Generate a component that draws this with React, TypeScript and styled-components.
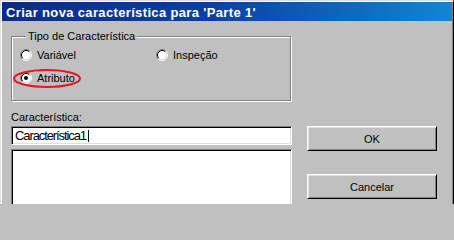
import React from "react";
import styled, { createGlobalStyle } from "styled-components";

const Global = createGlobalStyle`
  html, body { margin: 0; padding: 0; overflow: hidden; background: #c0c0c0; }
  body { width: 454px; height: 204px; }
`;

const Window = styled.div`
  box-sizing: border-box;
  width: 454px;
  height: 204px;
  overflow: hidden;
  display: flex;
  flex-direction: column;
  padding: 1px 1px 0 1px;
  background: #c0c0c0;
  border: 1px solid;
  border-bottom: 0;
  border-color: #dfdfdf #000 #000 #dfdfdf;
  box-shadow: inset 1px 1px 0 #fff, inset -1px 0 0 #808080;
  font-family: "Liberation Sans", Arial, sans-serif;
  font-size: 11px;
  color: #000;
`;

const TitleBar = styled.div`
  box-sizing: border-box;
  flex: none;
  height: 19px;
  padding: 2px 0 0 4px;
  background: linear-gradient(to right, #0a2a8c 0%, #0a3ea6 45%, #0c66bc 75%, #1086d4 100%);
  color: #fff;
  font-weight: bold;
  font-size: 13px;
  letter-spacing: 0.35px;
  line-height: 17px;
  white-space: nowrap;
`;

const Body = styled.div`
  flex: 1;
  min-height: 0;
  display: grid;
  grid-template-columns: 281px 130px;
  grid-template-rows: auto auto auto 1fr;
  column-gap: 15px;
  grid-template-areas:
    "group ."
    "label ."
    "input buttons"
    "area buttons";
  padding: 8px 15px 0 9px;
`;

const Group = styled.fieldset`
  grid-area: group;
  margin: 0;
  width: 280px;
  box-sizing: border-box;
  min-width: 0;
  padding: 6px 0 16px 8px;
  border: 1px solid #808080;
  box-shadow: 1px 1px 0 #fff, inset 1px 1px 0 #fff;
`;

const Legend = styled.legend`
  margin-left: 6px;
  padding: 0 2px;
  line-height: 14px;
  background: #c0c0c0;
`;

const Options = styled.div`
  display: grid;
  grid-template-columns: 136px auto;
  grid-auto-rows: 12px;
  row-gap: 11px;
`;

const Option = styled.label`
  position: relative;
  display: flex;
  align-items: center;
  gap: 5px;
  height: 12px;
  line-height: 13px;
  white-space: nowrap;
`;

const Highlight = styled.svg`
  position: absolute;
  left: -7px;
  top: -3px;
  width: 68px;
  height: 19px;
  overflow: visible;
  pointer-events: none;
`;

const FieldLabel = styled.div`
  grid-area: label;
  margin-top: 10px;
  line-height: 13px;
`;

const sunken = `
  box-sizing: border-box;
  border: 1px solid;
  border-color: #808080 #fff #fff #808080;
  box-shadow: inset 1px 1px 0 #000, inset -1px -1px 0 #dfdfdf;
  background: #fff;
`;

const TextInput = styled.div`
  grid-area: input;
  ${sunken}
  margin-top: 2px;
  height: 19px;
  padding: 0 1px 0 3px;
  display: flex;
  align-items: center;
  font-size: 13px;
  letter-spacing: -1.1px;
  line-height: 15px;
  white-space: nowrap;
`;

const Caret = styled.span`
  display: inline-block;
  width: 1px;
  height: 12px;
  margin-left: 2px;
  background: #000;
`;

const TextArea = styled.div`
  grid-area: area;
  ${sunken}
  margin-top: 4px;
  margin-bottom: -4px;
`;

const Buttons = styled.div`
  grid-area: buttons;
  margin-top: 2px;
  display: flex;
  flex-direction: column;
  gap: 23px;
`;

const Button = styled.button`
  box-sizing: border-box;
  width: 130px;
  height: 25px;
  margin: 0;
  padding: 0;
  background: #c0c0c0;
  border: 1px solid;
  border-color: #fff #000 #000 #fff;
  box-shadow: inset 1px 1px 0 #dfdfdf, inset -1px -1px 0 #808080;
  font-family: "Liberation Sans", Arial, sans-serif;
  font-size: 11px;
  color: #000;
`;

const Radio = ({ checked }: { checked?: boolean }) => (
  <svg width="12" height="12" viewBox="0 0 12 12" style={{ flex: "none" }}>
    <circle cx="6" cy="6" r="4.5" fill="#fff" />
    <path d="M9.89 2.11 A5.5 5.5 0 0 0 2.11 9.89" fill="none" stroke="#808080" />
    <path d="M2.11 9.89 A5.5 5.5 0 0 0 9.89 2.11" fill="none" stroke="#fff" />
    <path d="M9.18 2.82 A4.5 4.5 0 0 0 2.82 9.18" fill="none" stroke="#000" />
    <path d="M2.82 9.18 A4.5 4.5 0 0 0 9.18 2.82" fill="none" stroke="#dfdfdf" />
    {checked && <circle cx="6" cy="6" r="2" fill="#000" />}
  </svg>
);

export default function App() {
  return (
    <>
      <Global />
      <Window>
        <TitleBar>Criar nova característica para 'Parte 1'</TitleBar>
        <Body>
          <Group>
            <Legend>Tipo de Característica</Legend>
            <Options>
              <Option>
                <Radio />
                Variável
              </Option>
              <Option>
                <Radio />
                Inspeção
              </Option>
              <Option>
                <Radio checked />
                Atributo
                <Highlight viewBox="0 0 68 19">
                  <ellipse cx="34" cy="9.5" rx="33" ry="8.5" fill="none" stroke="#e8141c" strokeWidth="2" />
                </Highlight>
              </Option>
            </Options>
          </Group>
          <FieldLabel>Característica:</FieldLabel>
          <TextInput>
            Característica1
            <Caret />
          </TextInput>
          <TextArea />
          <Buttons>
            <Button>OK</Button>
            <Button>Cancelar</Button>
          </Buttons>
        </Body>
      </Window>
    </>
  );
}
